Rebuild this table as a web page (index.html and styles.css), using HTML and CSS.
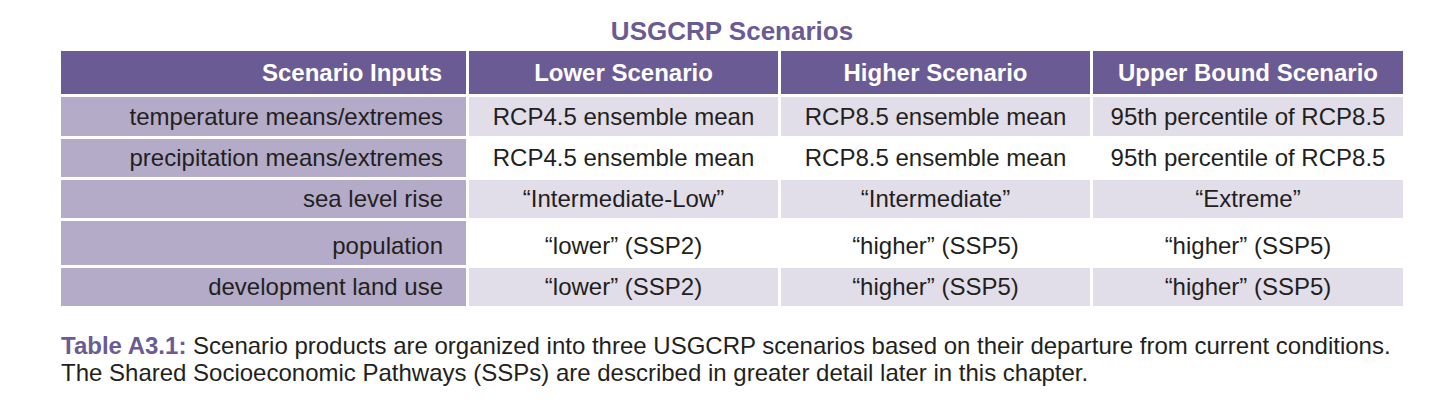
FILE: index.html
```html
<!DOCTYPE html>
<html lang="en">
<head>
<meta charset="utf-8">
<title>USGCRP Scenarios</title>
<link rel="stylesheet" href="styles.css">
</head>
<body>
<div class="wrap">
  <h1 class="title">USGCRP Scenarios</h1>
  <div class="table">
    <div class="cell head first">Scenario Inputs</div>
    <div class="cell head">Lower Scenario</div>
    <div class="cell head">Higher Scenario</div>
    <div class="cell head">Upper Bound Scenario</div>

    <div class="cell label">temperature means/extremes</div>
    <div class="cell shade">RCP4.5 ensemble mean</div>
    <div class="cell shade">RCP8.5 ensemble mean</div>
    <div class="cell shade">95th percentile of RCP8.5</div>

    <div class="cell label">precipitation means/extremes</div>
    <div class="cell">RCP4.5 ensemble mean</div>
    <div class="cell">RCP8.5 ensemble mean</div>
    <div class="cell">95th percentile of RCP8.5</div>

    <div class="cell label">sea level rise</div>
    <div class="cell shade">“Intermediate-Low”</div>
    <div class="cell shade">“Intermediate”</div>
    <div class="cell shade">“Extreme”</div>

    <div class="cell label tall">population</div>
    <div class="cell tall">“lower” (SSP2)</div>
    <div class="cell tall">“higher” (SSP5)</div>
    <div class="cell tall">“higher” (SSP5)</div>

    <div class="cell label">development land use</div>
    <div class="cell shade">“lower” (SSP2)</div>
    <div class="cell shade">“higher” (SSP5)</div>
    <div class="cell shade">“higher” (SSP5)</div>
  </div>
  <p class="caption"><span class="cap-label">Table A3.1:</span> Scenario products are organized into three USGCRP scenarios based on their departure from current conditions.<br>The Shared Socioeconomic Pathways (SSPs) are described in greater detail later in this chapter.</p>
</div>
</body>
</html>
```

FILE: styles.css
```css
html, body {
  margin: 0;
  padding: 0;
  background: #ffffff;
}

body {
  font-family: "Liberation Sans", Arial, sans-serif;
  color: #231f20;
}

.wrap {
  width: 1342px;
  margin-left: 61px;
  padding-top: 16px;
}

.title {
  margin: 0 0 5px 0;
  font-size: 26px;
  line-height: 30px;
  font-weight: bold;
  color: #6b5b95;
  text-align: center;
}

.table {
  display: grid;
  grid-template-columns: 405px 309px 309px 310px;
  grid-template-rows: 43px 39px 38px 38px 44px 38px;
  column-gap: 3px;
  row-gap: 3px;
}

.cell {
  display: flex;
  align-items: center;
  justify-content: center;
  font-size: 24px;
  white-space: nowrap;
}

.head {
  background: #6b5b94;
  color: #ffffff;
  font-weight: bold;
}

.first {
  justify-content: flex-end;
  padding-right: 24px;
}

.label {
  background: #b4abc9;
  justify-content: flex-end;
  padding-right: 23px;
}

.tall {
  padding-top: 5px;
}

.shade {
  background: #e1dde9;
}

.caption {
  margin: 26px 0 0 0;
  font-size: 24px;
  line-height: 27px;
  white-space: nowrap;
}

.cap-label {
  font-weight: bold;
  color: #6b5b95;
}
```
